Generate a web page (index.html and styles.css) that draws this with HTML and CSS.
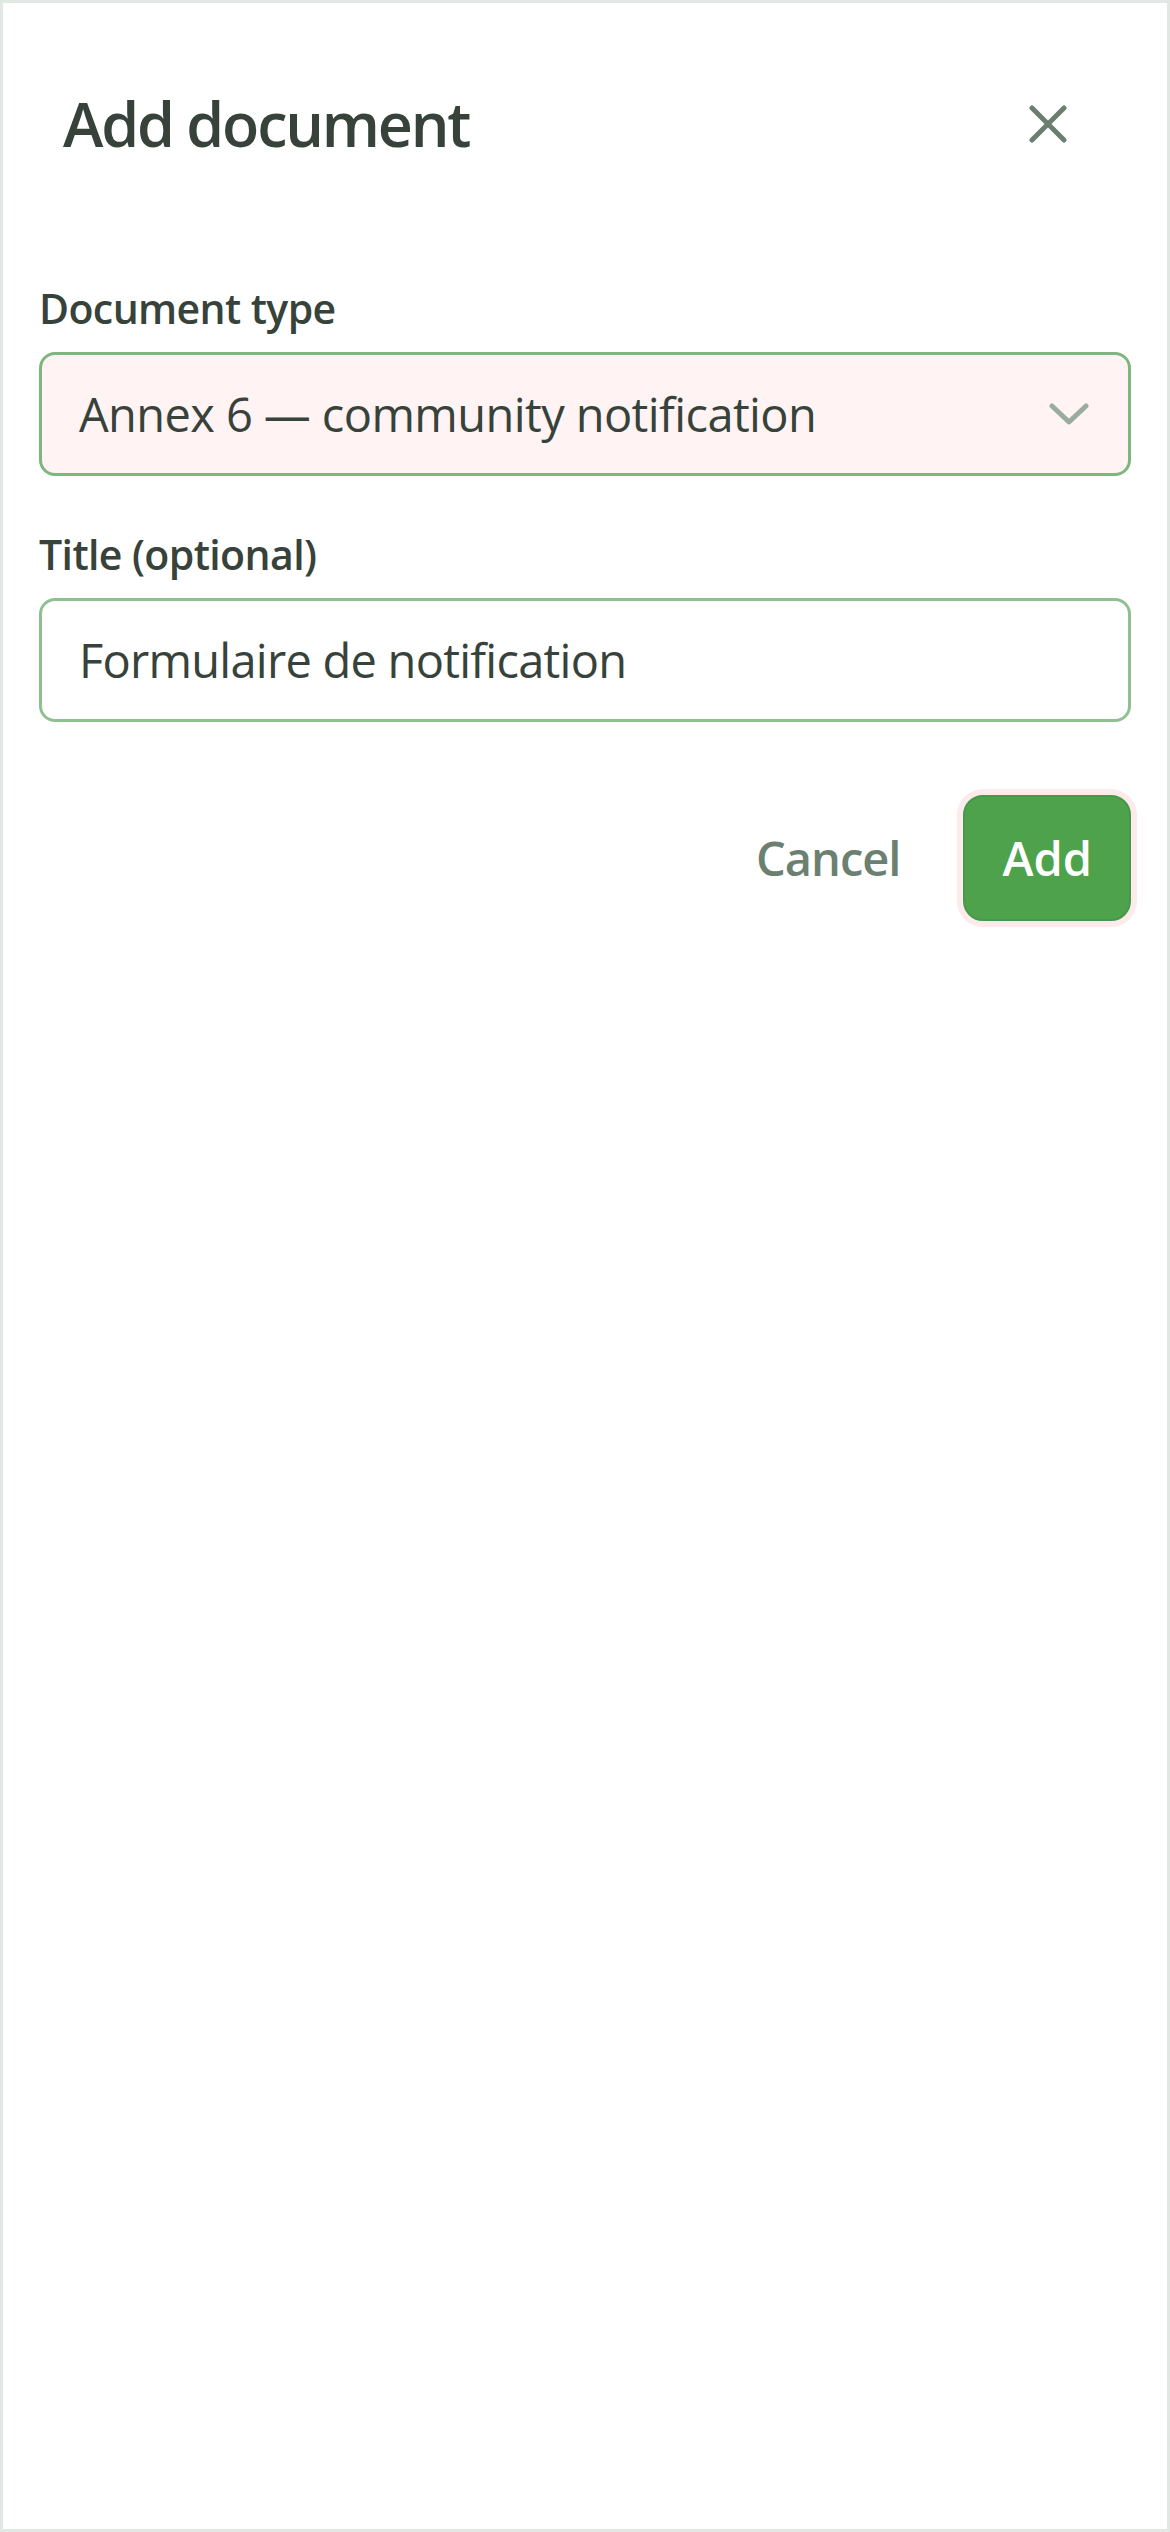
FILE: index.html
```html
<!DOCTYPE html>
<html lang="en">
<head>
<meta charset="utf-8">
<title>Add document</title>
<link rel="stylesheet" href="styles.css">
</head>
<body>
<div class="frame">
  <div class="panel">
    <header class="head">
      <h1 class="title">Add document</h1>
      <button class="close" aria-label="Close">
        <svg width="38" height="38" viewBox="0 0 38 38"><path d="M3 3L35 35M35 3L3 35" fill="none" stroke="currentColor" stroke-width="5" stroke-linecap="round"/></svg>
      </button>
    </header>
    <div class="field">
      <label class="label">Document type</label>
      <div class="select">
        <span class="value">Annex 6 — community notification</span>
        <svg class="chev" width="40" height="22" viewBox="0 0 40 22"><path d="M3 3L20 19L37 3" fill="none" stroke="currentColor" stroke-width="5" stroke-linecap="round" stroke-linejoin="round"/></svg>
      </div>
    </div>
    <div class="field field2">
      <label class="label">Title (optional)</label>
      <div class="input"><span class="value value2">Formulaire de notification</span></div>
    </div>
    <div class="actions">
      <button class="btn cancel">Cancel</button>
      <button class="btn add">Add</button>
    </div>
  </div>
</div>
</body>
</html>
```

FILE: styles.css
```css
* { box-sizing: border-box; }
html, body { margin: 0; padding: 0; background: #ffffff; }
body { font-family: "Open Sans", "Noto Sans", sans-serif; color: #36423a; }
.frame {
  width: 1170px;
  height: 2532px;
  border: 3px solid #e1e8e4;
  background: #ffffff;
}
.panel { padding: 84px 36px 0 36px; }
.head {
  display: flex;
  align-items: center;
  justify-content: space-between;
  padding: 0 64px 0 24px;
}
.title {
  margin: 0;
  font-size: 61px;
  line-height: 74px;
  font-weight: 600;
  color: #36423a;
  letter-spacing: -2.2px;
}
.close {
  border: 0;
  background: none;
  padding: 0;
  width: 38px;
  height: 38px;
  color: #6b7f70;
  display: flex;
}
.field { margin-top: 122px; display: flex; flex-direction: column; }
.field2 { margin-top: 53px; }
.label {
  font-size: 41px;
  line-height: 50px;
  font-weight: 600;
  color: #36423a;
  margin-bottom: 19px;
  letter-spacing: -0.6px;
}
.select, .input {
  height: 124px;
  border: 3px solid #7db67f;
  border-radius: 16px;
  background: #fff3f3;
  display: flex;
  align-items: center;
  justify-content: space-between;
  padding: 0 39px 0 37px;
}
.input { background: #ffffff; border-color: #8fc091; }
.value { font-size: 47px; color: #36423a; font-weight: 400; letter-spacing: -0.6px; }
.value2 { letter-spacing: -0.75px; }
.chev { color: #9aaca0; }
.actions {
  display: flex;
  justify-content: flex-end;
  align-items: center;
  gap: 23px;
  margin-top: 73px;
}
.btn {
  font-family: "Open Sans", "Noto Sans", sans-serif;
  font-size: 47px;
  font-weight: 600;
  border: 0;
  height: 126px;
  border-radius: 20px;
  padding: 0 40px;
  background: none;
}
.cancel { color: #6b8070; letter-spacing: -1px; }
.add {
  background: #4ea24c;
  color: #ffffff;
  border: 2px solid #46984a;
  box-shadow: 0 0 0 6px #fdeaea;
  padding: 0 37px;
}
```
